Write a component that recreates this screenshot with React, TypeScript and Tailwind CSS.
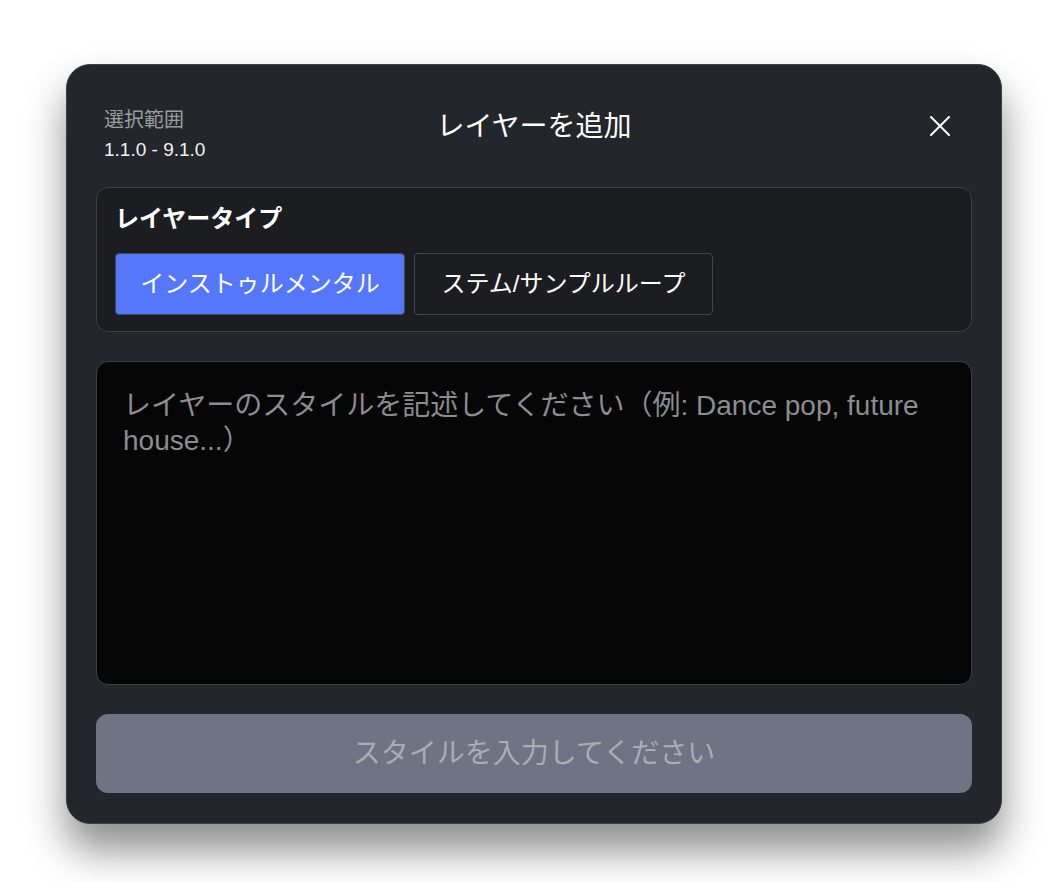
import React from "react";

export default function App() {
  return (
    <div
      className="min-h-[882px] w-full bg-white pl-[66px] pt-[64px]"
      style={{ fontFamily: '"Liberation Sans", "Noto Sans CJK JP", sans-serif' }}
    >
      <div className="flex w-[936px] flex-col rounded-[24px] border border-[#3a3f49] bg-[#23262b] px-[29px] pb-[30px] pt-[40px] shadow-[0_26px_40px_rgba(0,0,0,0.45)]">
        {/* header */}
        <div className="grid grid-cols-[1fr_auto_1fr] px-2">
          <div className="flex flex-col">
            <span className="text-[20px] leading-[30px] text-[#9a9ca2]">選択範囲</span>
            <span className="text-[19px] font-medium leading-[30px] text-[#f2f2f2]">1.1.0 - 9.1.0</span>
          </div>
          <div className="mt-[3px] text-[28px] leading-[38px] text-white">レイヤーを追加</div>
          <div className="flex justify-end pr-[14px] pt-[11px]">
            <svg width="20" height="20" viewBox="0 0 20 20" fill="none">
              <path d="M1 1L19 19M19 1L1 19" stroke="#ffffff" strokeWidth="2" strokeLinecap="round" />
            </svg>
          </div>
        </div>

        {/* layer type */}
        <div className="mt-[22px] flex flex-col rounded-[12px] border border-[#3a404c] bg-[#1c1d21] px-[18px] pb-[16px] pt-[15px]">
          <div className="text-[24px] font-bold leading-[32px] text-white">レイヤータイプ</div>
          <div className="mt-[18px] flex gap-[9px]">
            <button className="flex h-[62px] w-[290px] items-center justify-center rounded-[4px] border border-[#3f4656] bg-[#5577fc] text-[24px] text-white">
              インストゥルメンタル
            </button>
            <button className="flex h-[62px] w-[299px] items-center justify-center rounded-[4px] border border-[#3f4656] bg-[#1c1d21] text-[24px] text-white">
              ステム/サンプルループ
            </button>
          </div>
        </div>

        {/* textarea */}
        <div className="mt-[29px] h-[324px] rounded-[12px] border border-[#3a404c] bg-[#060606] pl-[26px] pr-[30px] pt-[26px]">
          <div className="text-[28px] leading-[35px] text-[#8b8d91]">
            レイヤーのスタイルを記述してください（例: Dance pop, future house...）
          </div>
        </div>

        {/* submit */}
        <button className="mt-[29px] flex h-[79px] items-center justify-center rounded-[12px] bg-[#6e7483] text-[28px] text-[#a9adb5]">
          スタイルを入力してください
        </button>
      </div>
    </div>
  );
}
